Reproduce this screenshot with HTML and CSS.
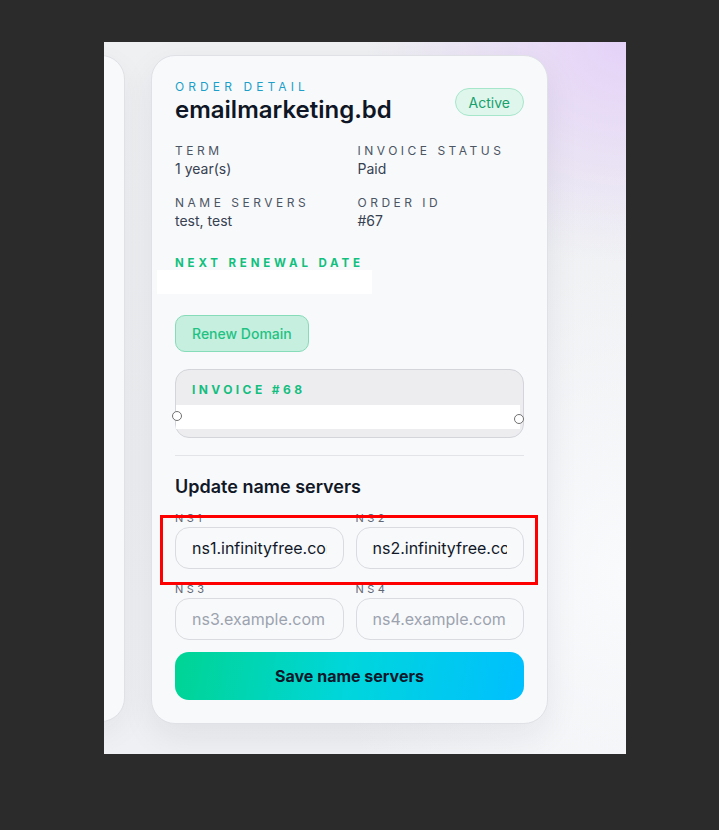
FILE: index.html
```html
<!DOCTYPE html>
<html lang="en">
<head>
<meta charset="utf-8">
<title>Order detail</title>
<link rel="stylesheet" href="styles.css">
</head>
<body>
<div class="panel">
  <div class="card card-side"></div>
  <div class="card card-main">
    <div class="header">
      <div class="header-text">
        <div class="eyebrow">ORDER DETAIL</div>
        <h1 class="title">emailmarketing.bd</h1>
      </div>
      <span class="badge">Active</span>
    </div>

    <div class="facts">
      <div class="fact">
        <div class="fact-label">TERM</div>
        <div class="fact-value">1 year(s)</div>
      </div>
      <div class="fact">
        <div class="fact-label">INVOICE STATUS</div>
        <div class="fact-value">Paid</div>
      </div>
      <div class="fact">
        <div class="fact-label">NAME SERVERS</div>
        <div class="fact-value">test, test</div>
      </div>
      <div class="fact">
        <div class="fact-label">ORDER ID</div>
        <div class="fact-value">#67</div>
      </div>
    </div>

    <div class="renewal-label">NEXT RENEWAL DATE</div>
    <div class="redacted"></div>

    <button class="renew-btn" type="button">Renew Domain</button>

    <div class="invoice">
      <div class="invoice-label">INVOICE #68</div>
      <div class="invoice-band"></div>
      <span class="handle handle-left"></span>
      <span class="handle handle-right"></span>
    </div>

    <hr class="divider">

    <h2 class="section-title">Update name servers</h2>

    <div class="ns-grid">
      <label class="ns-field">
        <span class="ns-label">NS1</span>
        <input class="ns-input" type="text" value="ns1.infinityfree.com">
      </label>
      <label class="ns-field">
        <span class="ns-label">NS2</span>
        <input class="ns-input" type="text" value="ns2.infinityfree.com">
      </label>
      <label class="ns-field">
        <span class="ns-label">NS3</span>
        <input class="ns-input" type="text" placeholder="ns3.example.com">
      </label>
      <label class="ns-field">
        <span class="ns-label">NS4</span>
        <input class="ns-input" type="text" placeholder="ns4.example.com">
      </label>
    </div>

    <button class="save-btn" type="button">Save name servers</button>

    <div class="highlight"></div>
  </div>
</div>
</body>
</html>
```

FILE: styles.css
```css
* { box-sizing: border-box; }

html, body {
  margin: 0;
  padding: 0;
}

body {
  background: #2b2b2b;
  width: 719px;
  height: 830px;
  overflow: hidden;
  font-family: Inter, "Noto Sans", sans-serif;
}

.panel {
  margin: 42px 0 0 104px;
  width: 522px;
  height: 712px;
  overflow: hidden;
  display: flex;
  align-items: flex-start;
  gap: 26px;
  padding-top: 13px;
  background:
    radial-gradient(ellipse 260px 220px at 100% 0%, rgba(226, 200, 250, 0.75), rgba(226, 200, 250, 0) 100%),
    radial-gradient(ellipse 300px 420px at 100% 75%, rgba(250, 251, 253, 0.95), rgba(250, 251, 253, 0) 100%),
    linear-gradient(180deg, #eef0f2 0%, #eceef1 60%, #eff0f3 100%);
}

.card {
  flex: none;
  background: #f8f9fb;
  border: 1px solid #dfe1e6;
  border-radius: 24px;
}

.card-side {
  width: 396px;
  height: 667px;
  margin-left: -375px;
  box-shadow: 0 10px 30px rgba(30, 35, 50, 0.05);
}

.card-main {
  position: relative;
  width: 397px;
  height: 669px;
  padding: 23px 23px 23px;
  box-shadow: 0 12px 34px rgba(30, 35, 50, 0.07);
}

/* header */
.header {
  display: flex;
  justify-content: space-between;
  align-items: center;
}

.eyebrow {
  font-size: 12px;
  line-height: 16px;
  letter-spacing: 4.1px;
  color: #1c9fc9;
  font-weight: 400;
}

.title {
  margin: 1px 0 0;
  font-size: 24px;
  line-height: 28px;
  font-weight: 600;
  color: #0f1625;
}

.badge {
  display: inline-flex;
  align-items: center;
  height: 28px;
  padding: 0 13px;
  border-radius: 14px;
  background: #dff6ec;
  border: 1px solid #a6e7cb;
  color: #17a06c;
  font-size: 14px;
  font-weight: 400;
  margin-top: 1px;
}

/* facts */
.facts {
  margin-top: 19px;
  display: grid;
  grid-template-columns: 1fr 1fr;
  column-gap: 16px;
  row-gap: 16px;
}

.fact-label {
  font-size: 12px;
  line-height: 16px;
  letter-spacing: 3.5px;
  color: #4b5563;
  font-weight: 400;
}

.fact-value {
  font-size: 14px;
  line-height: 20px;
  color: #374151;
}

.renewal-label {
  margin-top: 25px;
  font-size: 11.5px;
  line-height: 14px;
  letter-spacing: 3.85px;
  font-weight: 700;
  color: #12c07e;
}

.redacted {
  width: 215px;
  height: 24px;
  margin-left: -18px;
  background: #ffffff;
}

.renew-btn {
  display: flex;
  align-items: center;
  margin-top: 21px;
  height: 37px;
  padding: 0 16px;
  border-radius: 10px;
  border: 1px solid #86dbb8;
  background: #c6efe0;
  color: #1fc282;
  font-family: inherit;
  font-size: 14px;
  font-weight: 500;
}

/* invoice */
.invoice {
  position: relative;
  margin-top: 17px;
  height: 69px;
  padding: 12px 0 0 0;
  border: 1px solid #d3d5da;
  border-radius: 14px;
  background: #ededf0;
}

.invoice-label {
  padding-left: 16px;
  font-size: 12px;
  line-height: 16px;
  letter-spacing: 3.4px;
  font-weight: 700;
  color: #15be7f;
}

.invoice-band {
  margin-top: 7px;
  margin-right: 3px;
  height: 24px;
  background: #ffffff;
}

.handle {
  position: absolute;
  width: 10px;
  height: 10px;
  border-radius: 50%;
  border: 1.5px solid #707070;
  background: #ffffff;
}

.handle-left { left: -4px; top: 41px; }
.handle-right { left: 338px; top: 44px; }

.divider {
  margin: 17px 0 0;
  border: 0;
  height: 1px;
  background: #e2e4e8;
}

.section-title {
  margin: 19px 0 0;
  font-size: 18px;
  line-height: 24px;
  font-weight: 600;
  color: #111827;
}

/* name servers */
.ns-grid {
  margin-top: 12px;
  display: grid;
  grid-template-columns: 1fr 1fr;
  column-gap: 12px;
  row-gap: 13px;
}

.ns-field {
  display: flex;
  flex-direction: column;
}

.ns-label {
  font-size: 11px;
  line-height: 14px;
  letter-spacing: 3.4px;
  color: #5f6673;
  margin-bottom: 2px;
}

.ns-input {
  width: 100%;
  height: 42px;
  padding: 0 16px;
  border: 1px solid #d9dbe0;
  border-radius: 14px;
  background: #f8f9fb;
  font-family: inherit;
  font-size: 16px;
  color: #111827;
  outline: none;
}

.ns-input::placeholder {
  color: #9ca3af;
}

.save-btn {
  display: block;
  width: 100%;
  margin-top: 12px;
  height: 48px;
  border: 0;
  border-radius: 14px;
  background: linear-gradient(100deg, #00d493 0%, #00d6dc 50%, #00bfff 100%);
  font-family: inherit;
  font-size: 16px;
  font-weight: 700;
  color: #0f172a;
}

/* annotation overlay */
.highlight {
  position: absolute;
  left: 8px;
  top: 459px;
  width: 378px;
  height: 70px;
  border: 3px solid #ff0000;
  pointer-events: none;
}
```
